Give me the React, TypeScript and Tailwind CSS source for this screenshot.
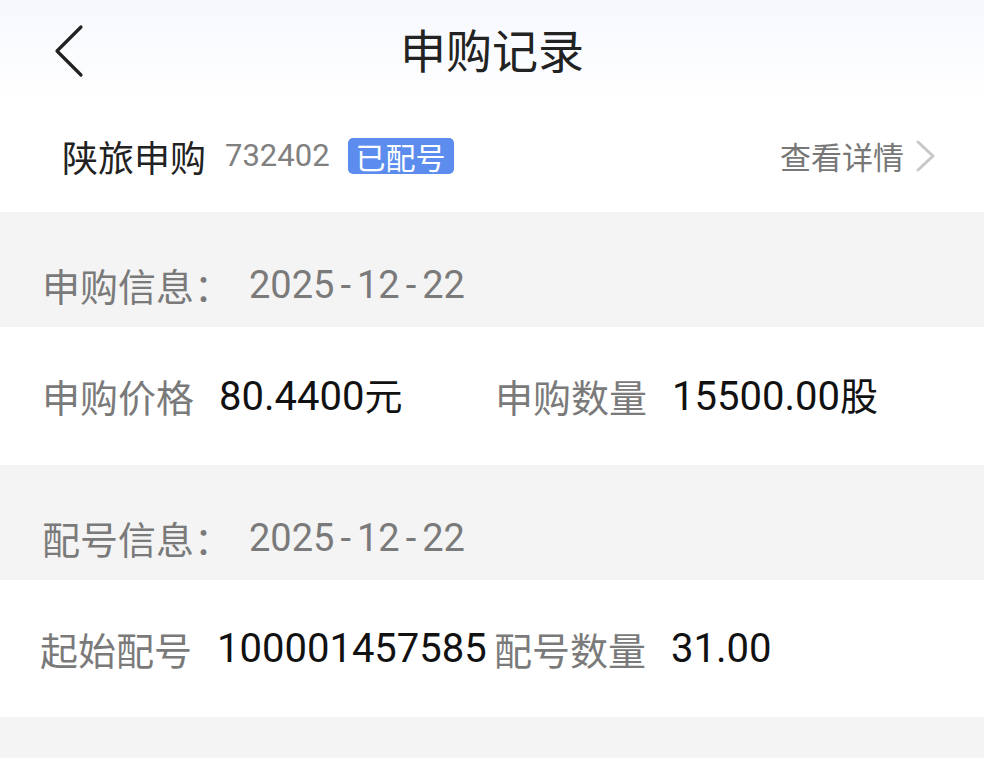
import React from "react";

const cjk = { fontFamily: "'Noto Sans CJK SC', sans-serif" };
const num = { fontFamily: "Roboto, 'Noto Sans CJK SC', sans-serif" };

function DateText({ text }: { text: string }) {
  const parts = text.split("-");
  return (
    <span className="text-[38px] text-[#7a7a7a] leading-none" style={num}>
      {parts.map((p, i) => (
        <React.Fragment key={i}>
          {i > 0 && <span className="px-[6px]">-</span>}
          {p}
        </React.Fragment>
      ))}
    </span>
  );
}

function SectionHeader({ label, date }: { label: string; date: string }) {
  return (
    <div className="h-[115px] bg-[#f4f4f4] flex items-center pt-[30px] pl-[42px]">
      <span className="text-[38px] text-[#7a7a7a] leading-none w-[207px]" style={cjk}>
        {label}
      </span>
      <DateText text={date} />
    </div>
  );
}

function Cell({ label, value, unit }: { label: string; value: string; unit?: string }) {
  return (
    <div className="flex items-center">
      <span className="text-[38px] text-[#7a7a7a] leading-none w-[177px] shrink-0" style={cjk}>
        {label}
      </span>
      <span className="text-[40px] text-[#111] leading-none whitespace-nowrap" style={num}>
        {value}
        {unit && (
          <span className="text-[38px]" style={cjk}>
            {unit}
          </span>
        )}
      </span>
    </div>
  );
}

export default function App() {
  return (
    <div className="w-[984px] h-[758px] overflow-hidden bg-[#f4f4f4]" style={cjk}>
      {/* Header */}
      <div className="h-[105px] bg-gradient-to-b from-[#f6f8fd] to-white relative flex items-center justify-center">
        <svg
          className="absolute left-[52px] top-[24px]"
          width="34"
          height="54"
          viewBox="0 0 34 54"
          fill="none"
        >
          <path d="M29 3 L5 27 L29 51" stroke="#222" strokeWidth="3.2" strokeLinecap="round" strokeLinejoin="round" />
        </svg>
        <span className="text-[46px] text-[#222] leading-none -mt-[10px]" style={cjk}>
          申购记录
        </span>
      </div>

      {/* Stock row */}
      <div className="h-[107px] bg-white flex items-center pl-[62px] pr-[46px] pb-[6px]">
        <span className="text-[36px] text-[#222] leading-none" style={cjk}>
          陕旅申购
        </span>
        <span className="text-[31px] text-[#808080] leading-none ml-[19px]" style={num}>
          732402
        </span>
        <span
          className="ml-[18px] h-[36px] px-[8px] rounded-[5px] bg-[#5b8cee] text-white text-[30px] leading-none flex items-center"
          style={cjk}
        >
          已配号
        </span>
        <div className="ml-auto flex items-center">
          <span className="text-[31px] text-[#777] leading-none" style={cjk}>
            查看详情
          </span>
          <svg className="ml-[10px]" width="24" height="34" viewBox="0 0 24 34" fill="none">
            <path d="M4 3 L19 17 L4 31" stroke="#c8c8c8" strokeWidth="3" strokeLinecap="round" strokeLinejoin="round" />
          </svg>
        </div>
      </div>

      <SectionHeader label="申购信息：" date="2025-12-22" />

      <div className="h-[138px] bg-white grid grid-cols-[453px_1fr] items-center pl-[42px]">
        <Cell label="申购价格" value="80.4400" unit="元" />
        <Cell label="申购数量" value="15500.00" unit="股" />
      </div>

      <SectionHeader label="配号信息：" date="2025-12-22" />

      <div className="h-[137px] bg-white grid grid-cols-[454px_1fr] items-center pl-[40px]">
        <Cell label="起始配号" value="100001457585" />
        <Cell label="配号数量" value="31.00" />
      </div>

      <div className="h-[40px] bg-[#f4f4f4]" />
    </div>
  );
}
